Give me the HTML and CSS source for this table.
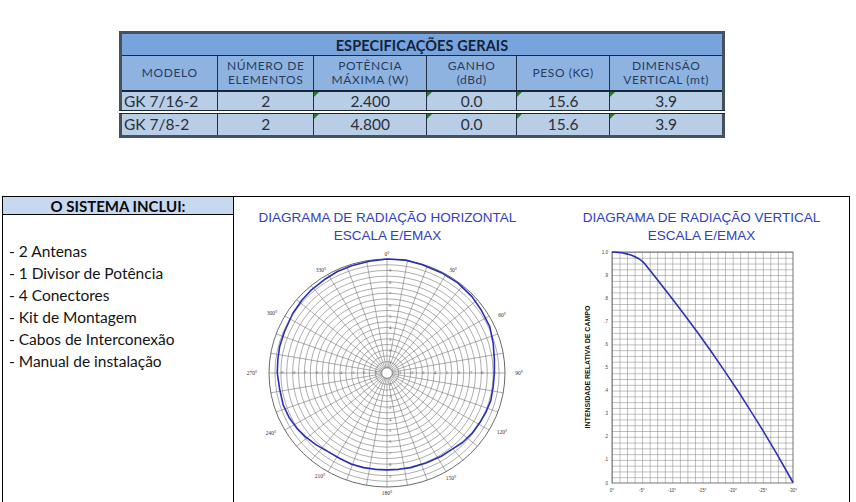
FILE: index.html
```html
<!DOCTYPE html>
<html lang="pt">
<head>
<meta charset="utf-8">
<title>Especificações Gerais</title>
<link rel="stylesheet" href="styles.css">
</head>
<body>
<div class="page">
  <section class="specs">
    <table class="spec">
      <colgroup>
        <col class="c-model"><col class="c-num"><col class="c-pot"><col class="c-gain"><col class="c-peso"><col class="c-dim">
      </colgroup>
      <tr class="title"><th colspan="6">ESPECIFICAÇÕES GERAIS</th></tr>
      <tr class="head">
        <th>MODELO</th>
        <th>NÚMERO DE<br>ELEMENTOS</th>
        <th>POTÊNCIA<br>MÁXIMA (W)</th>
        <th>GANHO<br>(dBd)</th>
        <th>PESO (KG)</th>
        <th>DIMENSÃO<br>VERTICAL (mt)</th>
      </tr>
      <tr class="row">
        <td class="model">GK 7/16-2</td><td>2</td><td class="flag">2.400</td><td class="flag">0.0</td><td class="flag">15.6</td><td class="flag">3.9</td>
      </tr>
      <tr class="row second">
        <td class="model">GK 7/8-2</td><td>2</td><td class="flag">4.800</td><td class="flag">0.0</td><td class="flag">15.6</td><td class="flag">3.9</td>
      </tr>
    </table>
  </section>

  <section class="system">
    <aside class="includes">
      <div class="inc-head">O SISTEMA INCLUI:</div>
      <ul class="inc-list">
        <li>- 2 Antenas</li>
        <li>- 1 Divisor de Potência</li>
        <li>- 4 Conectores</li>
        <li>- Kit de Montagem</li>
        <li>- Cabos de Interconexão</li>
        <li>- Manual de instalação</li>
      </ul>
    </aside>

    <div class="diagram horiz">
      <div class="d-title">DIAGRAMA DE RADIAÇÃO HORIZONTAL<br>ESCALA E/EMAX</div>
      <svg class="chart" width="307" height="257" viewBox="0 0 307 257">
        <g class="polar-grid" transform="translate(153 128) scale(118 114)">
          <circle r="0.05"/><circle r="0.1"/><circle r="0.15"/><circle r="0.2"/><circle r="0.25"/>
          <circle r="0.3"/><circle r="0.35"/><circle r="0.4"/><circle r="0.45"/><circle r="0.5"/>
          <circle r="0.55"/><circle r="0.6"/><circle r="0.65"/><circle r="0.7"/><circle r="0.75"/>
          <circle r="0.8"/><circle r="0.85"/><circle r="0.9"/><circle r="0.95"/><circle class="outer" r="1"/>
          <line id="spoke" x1="0" y1="-0.05" x2="0" y2="-1"/>
          <use href="#spoke" transform="rotate(10)"/><use href="#spoke" transform="rotate(20)"/><use href="#spoke" transform="rotate(30)"/>
          <use href="#spoke" transform="rotate(40)"/><use href="#spoke" transform="rotate(50)"/><use href="#spoke" transform="rotate(60)"/>
          <use href="#spoke" transform="rotate(70)"/><use href="#spoke" transform="rotate(80)"/><use href="#spoke" transform="rotate(90)"/>
          <use href="#spoke" transform="rotate(100)"/><use href="#spoke" transform="rotate(110)"/><use href="#spoke" transform="rotate(120)"/>
          <use href="#spoke" transform="rotate(130)"/><use href="#spoke" transform="rotate(140)"/><use href="#spoke" transform="rotate(150)"/>
          <use href="#spoke" transform="rotate(160)"/><use href="#spoke" transform="rotate(170)"/><use href="#spoke" transform="rotate(180)"/>
          <use href="#spoke" transform="rotate(190)"/><use href="#spoke" transform="rotate(200)"/><use href="#spoke" transform="rotate(210)"/>
          <use href="#spoke" transform="rotate(220)"/><use href="#spoke" transform="rotate(230)"/><use href="#spoke" transform="rotate(240)"/>
          <use href="#spoke" transform="rotate(250)"/><use href="#spoke" transform="rotate(260)"/><use href="#spoke" transform="rotate(270)"/>
          <use href="#spoke" transform="rotate(280)"/><use href="#spoke" transform="rotate(290)"/><use href="#spoke" transform="rotate(300)"/>
          <use href="#spoke" transform="rotate(310)"/><use href="#spoke" transform="rotate(320)"/><use href="#spoke" transform="rotate(330)"/>
          <use href="#spoke" transform="rotate(340)"/><use href="#spoke" transform="rotate(350)"/>
          <circle class="hub" r="0.045"/>
          <path class="pattern" d="M0,-1 L0.16,-0.99 L0.3,-0.95 L0.46,-0.88 L0.6,-0.79 L0.72,-0.67 L0.8,-0.55 L0.87,-0.41 L0.9,-0.26 L0.91,-0.12 L0.91,0 L0.9,0.12 L0.88,0.24 L0.84,0.34 L0.79,0.43 L0.72,0.53 L0.64,0.61 L0.55,0.67 L0.46,0.73 L0.33,0.79 L0.2,0.83 L0.1,0.845 L0,0.85 L-0.1,0.845 L-0.2,0.83 L-0.3,0.8 L-0.4,0.75 L-0.5,0.69 L-0.6,0.63 L-0.69,0.56 L-0.76,0.49 L-0.83,0.39 L-0.88,0.28 L-0.91,0.14 L-0.93,0 L-0.925,-0.12 L-0.91,-0.23 L-0.87,-0.36 L-0.8,-0.52 L-0.72,-0.64 L-0.64,-0.73 L-0.53,-0.82 L-0.42,-0.89 L-0.3,-0.94 L-0.15,-0.98 Z"/>
        </g>
        <g class="ang">
          <text x="153" y="9">0°</text>
          <text x="219" y="25">30°</text>
          <text x="268" y="70">60°</text>
          <text x="285" y="128">90°</text>
          <text x="268" y="187">120°</text>
          <text x="217" y="233">150°</text>
          <text x="153" y="248">180°</text>
          <text x="86" y="231">210°</text>
          <text x="37" y="188">240°</text>
          <text x="18" y="128">270°</text>
          <text x="38" y="68">300°</text>
          <text x="87" y="25">330°</text>
        </g>
        <g class="num">
          <text x="155" y="117">1</text><text x="155" y="105">2</text><text x="155" y="94">3</text><text x="155" y="82">4</text><text x="155" y="71">5</text><text x="155" y="60">6</text><text x="155" y="48">7</text><text x="155" y="37">8</text><text x="155" y="25">9</text>
          <text x="155" y="139">1</text><text x="155" y="151">2</text><text x="155" y="162">3</text><text x="155" y="174">4</text><text x="155" y="185">5</text><text x="155" y="196">6</text><text x="155" y="208">7</text><text x="155" y="219">8</text><text x="155" y="231">9</text>
          <text x="165" y="127">1</text><text x="177" y="127">2</text><text x="188" y="127">3</text><text x="200" y="127">4</text><text x="212" y="127">5</text><text x="224" y="127">6</text><text x="236" y="127">7</text><text x="247" y="127">8</text><text x="259" y="127">9</text>
          <text x="141" y="127">1</text><text x="129" y="127">2</text><text x="118" y="127">3</text><text x="106" y="127">4</text><text x="94" y="127">5</text><text x="82" y="127">6</text><text x="70" y="127">7</text><text x="59" y="127">8</text><text x="47" y="127">9</text>
        </g>
      </svg>
    </div>

    <div class="diagram vert">
      <div class="d-title shift">DIAGRAMA DE RADIAÇÃO VERTICAL<br>ESCALA E/EMAX</div>
      <svg class="chart" width="309" height="257" viewBox="0 0 309 257">
        <defs>
          <pattern id="grid" x="71" y="7" width="7.5417" height="5.775" patternUnits="userSpaceOnUse">
            <path d="M0 0.3H7.5417M0.3 0V5.775" fill="none" stroke="#7d7d7d" stroke-width="0.6"/>
          </pattern>
        </defs>
        <rect x="71" y="7" width="181" height="231" fill="url(#grid)" stroke="#555" stroke-width="0.8"/>
        <path class="vcurve" d="M71,7 C84,7 97,11 104,19 C130,52 190,125 252,237.5"/>
        <g class="ylab">
          <text x="67" y="8.5">1.0</text><text x="67" y="31.5">.9</text><text x="67" y="54.5">.8</text><text x="67" y="77.5">.7</text><text x="67" y="101">.6</text><text x="67" y="124">.5</text><text x="67" y="147">.4</text><text x="67" y="170">.3</text><text x="67" y="193">.2</text><text x="67" y="216">.1</text><text x="67" y="239.5">0</text>
        </g>
        <g class="xlab">
          <text x="71" y="247">0°</text><text x="101" y="247">-5°</text><text x="131" y="247">-10°</text><text x="161.5" y="247">-15°</text><text x="192" y="247">-20°</text><text x="222" y="247">-25°</text><text x="252" y="247">-30°</text>
        </g>
        <text class="ytitle" transform="translate(49 122) rotate(-90)">INTENSIDADE RELATIVA DE CAMPO</text>
      </svg>
    </div>
  </section>
</div>
</body>
</html>
```

FILE: styles.css
```css
* { box-sizing: border-box; }

html, body {
  margin: 0;
  padding: 0;
  background: #ffffff;
}

.page {
  width: 856px;
  height: 502px;
  overflow: hidden;
  font-family: Lato, "Open Sans", sans-serif;
  color: #1b1b1b;
}

/* ---------- Top specification table ---------- */
.specs {
  height: 196px;
  padding: 31px 0 0 119px;
}

.spec {
  border-collapse: collapse;
  table-layout: fixed;
  width: 606px;
  border: 3px solid #45525e;
}

.c-model { width: 97px; }
.c-num { width: 95px; }
.c-pot { width: 113px; }
.c-gain { width: 89px; }
.c-peso { width: 93px; }
.c-dim { width: 113px; }

.spec th,
.spec td {
  padding: 0;
  border: 1px solid #223040;
  text-align: center;
  vertical-align: middle;
}

.spec .title th {
  height: 23px;
  background: #77a4dc;
  color: #14223a;
  font-weight: 700;
  font-size: 14.5px;
  letter-spacing: 0.1px;
  padding-top: 2px;
  border-bottom: 1px solid #1c2a3c;
}

.spec .head th {
  height: 35px;
  background: #8eb3e1;
  color: #2a3c5c;
  font-weight: 400;
  font-size: 12px;
  line-height: 14px;
  letter-spacing: 0.6px;
  border-bottom: 2px solid #1a2634;
}

.spec .row td {
  height: 21px;
  background: #b8cde6;
  color: #2a3038;
  font-size: 15.5px;
  line-height: 18px;
  position: relative;
}

.spec .row.second td {
  height: 25px;
  border-top: 4px double #1a2634;
}

.spec .row td.model {
  text-align: left;
  padding-left: 2px;
}

.spec td.flag::before {
  content: "";
  position: absolute;
  left: 0;
  top: 0;
  border-top: 5px solid #2a7a2a;
  border-right: 5px solid transparent;
}

/* ---------- Bottom frame ---------- */
.system {
  margin-left: 2px;
  width: 848px;
  height: 306px;
  display: flex;
  border: 1.5px solid #000;
  border-bottom: none;
}

.includes {
  width: 231px;
  flex: none;
  border-right: 1.5px solid #000;
}

.inc-head {
  height: 18px;
  background: #c6d9f1;
  border-bottom: 1px solid #000;
  text-align: center;
  font-weight: 700;
  font-size: 15px;
  line-height: 18px;
  color: #0a0a0a;
}

.inc-list {
  list-style: none;
  margin: 0;
  padding: 25px 0 0 6px;
  font-size: 15.5px;
  line-height: 22px;
  color: #141414;
}

.diagram {
  display: flex;
  flex-direction: column;
}

.horiz { width: 307px; flex: none; }
.vert { flex: 1; }

.d-title {
  padding-top: 12px;
  font-family: "Liberation Sans", Arial, sans-serif;
  font-size: 13.5px;
  line-height: 18px;
  color: #3040c4;
  text-align: center;
  white-space: nowrap;
}

.d-title.shift { padding-left: 12px; }

.chart { display: block; }

.polar-grid circle,
.polar-grid line,
.polar-grid path {
  fill: none;
  stroke: #6a6a6a;
  stroke-width: 0.55;
  vector-effect: non-scaling-stroke;
}

.polar-grid circle.outer {
  stroke: #444;
  stroke-width: 0.8;
}

.polar-grid circle.hub {
  fill: #ffffff;
  stroke: #555;
}

.polar-grid path.pattern {
  stroke: #2b2fb6;
  stroke-width: 1.6;
  stroke-linejoin: round;
}

.ang text {
  font-family: "Liberation Serif", serif;
  font-size: 5.5px;
  fill: #333;
  text-anchor: middle;
  dominant-baseline: central;
}

.num text {
  font-family: "Liberation Serif", serif;
  font-size: 4.5px;
  fill: #555;
  text-anchor: start;
  dominant-baseline: central;
}

.vcurve {
  fill: none;
  stroke: #2b2fb6;
  stroke-width: 1.6;
  stroke-linejoin: round;
}

.ylab text {
  font-family: "Liberation Sans", sans-serif;
  font-size: 4.5px;
  fill: #444;
  text-anchor: end;
}

.xlab text {
  font-family: "Liberation Sans", sans-serif;
  font-size: 4.5px;
  fill: #444;
  text-anchor: middle;
}

.ytitle {
  font-family: "Liberation Sans", sans-serif;
  font-weight: 700;
  font-size: 7px;
  fill: #111;
  text-anchor: middle;
}
```
